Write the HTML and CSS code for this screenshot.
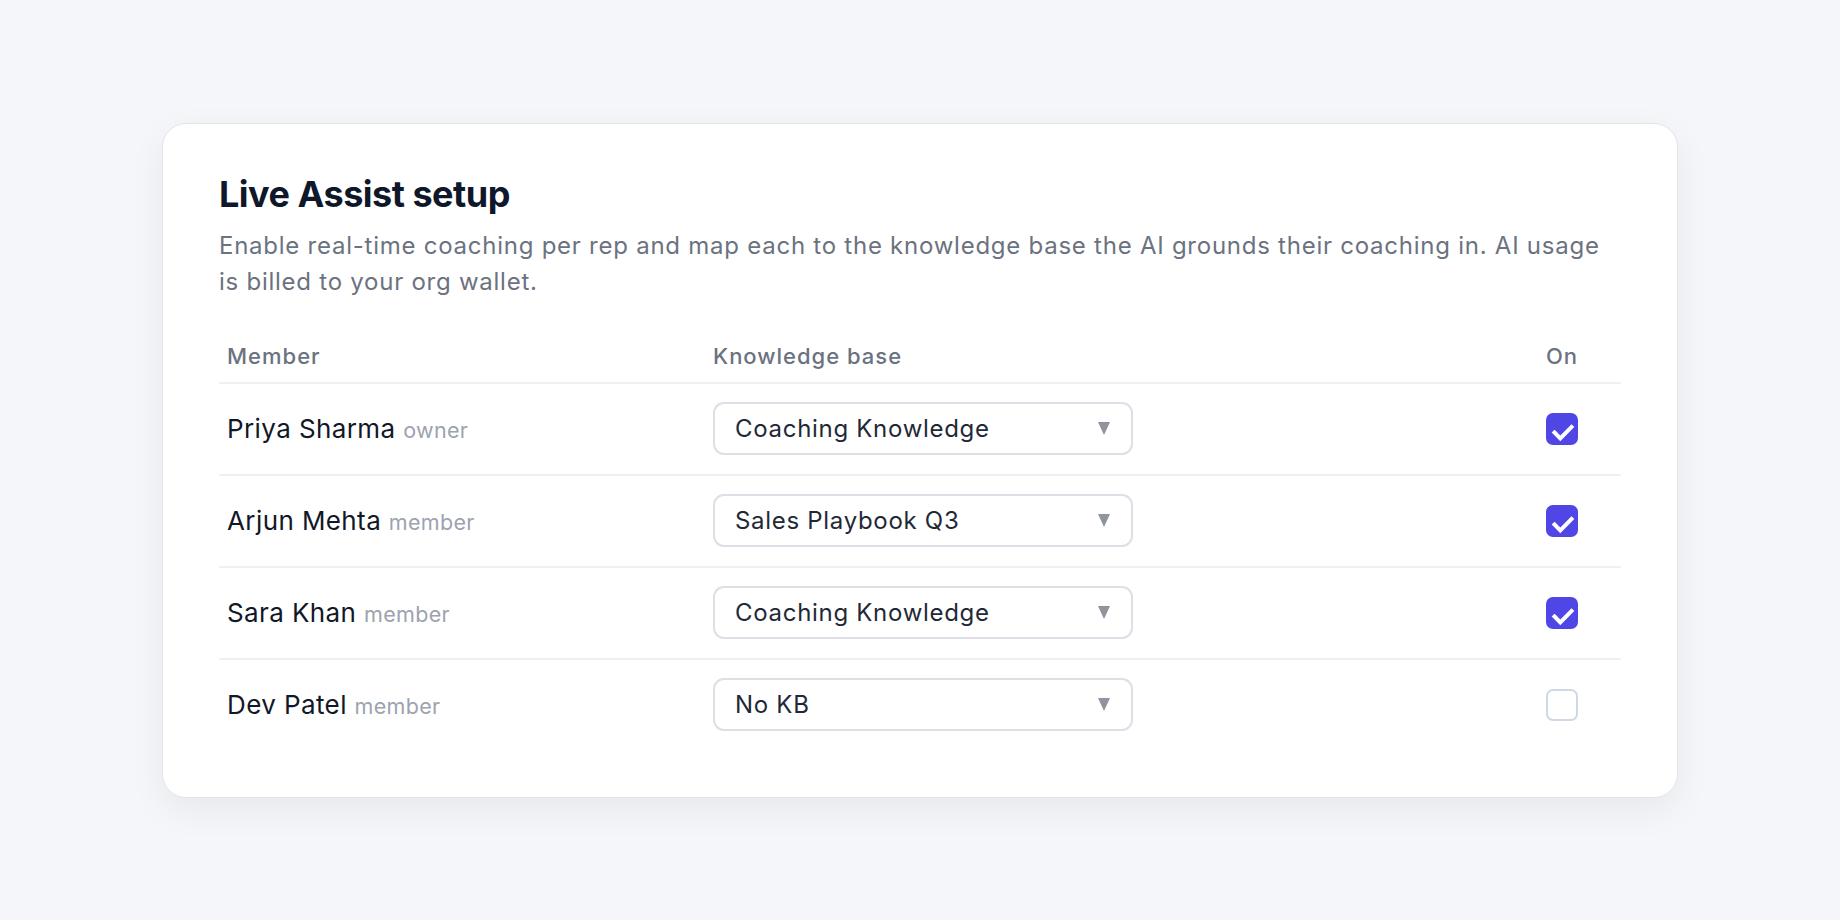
FILE: index.html
```html
<!DOCTYPE html>
<html lang="en">
<head>
    <meta charset="UTF-8">
    <meta name="viewport" content="width=device-width, initial-scale=1.0">
    <title>Live Assist setup</title>
    <link rel="stylesheet" href="styles.css">
</head>
<body>

<div class="card">
    <h1 class="title">Live Assist setup</h1>
    <p class="subtitle">Enable real-time coaching per rep and map each to the knowledge base the AI grounds their coaching in. AI usage is billed to your org wallet.</p>

    <div class="kb-table">
        <div class="row head">
            <div class="cell">Member</div>
            <div class="cell">Knowledge base</div>
            <div class="cell toggle">On</div>
        </div>

        <div class="row">
            <div class="cell member">Priya Sharma <span class="role">owner</span></div>
            <div class="cell">
                <div class="select">Coaching Knowledge <span class="arrow"></span></div>
            </div>
            <div class="cell toggle"><span class="check on"><svg viewBox="0 0 32 32"><path d="M8.5 19.5l5.8 5.8L25.5 14"/></svg></span></div>
        </div>

        <div class="row">
            <div class="cell member">Arjun Mehta <span class="role">member</span></div>
            <div class="cell">
                <div class="select">Sales Playbook Q3 <span class="arrow"></span></div>
            </div>
            <div class="cell toggle"><span class="check on"><svg viewBox="0 0 32 32"><path d="M8.5 19.5l5.8 5.8L25.5 14"/></svg></span></div>
        </div>

        <div class="row">
            <div class="cell member">Sara Khan <span class="role">member</span></div>
            <div class="cell">
                <div class="select">Coaching Knowledge <span class="arrow"></span></div>
            </div>
            <div class="cell toggle"><span class="check on"><svg viewBox="0 0 32 32"><path d="M8.5 19.5l5.8 5.8L25.5 14"/></svg></span></div>
        </div>

        <div class="row">
            <div class="cell member">Dev Patel <span class="role">member</span></div>
            <div class="cell">
                <div class="select">No KB <span class="arrow"></span></div>
            </div>
            <div class="cell toggle"><span class="check"></span></div>
        </div>
    </div>
</div>

</body>
</html>
```

FILE: styles.css
```css
/* Page */
body {
    margin: 0;
    font-family: Inter, "Noto Sans", sans-serif;
    display: flex;
    justify-content: center;
    align-items: center;
    height: 100vh;
    background-color: #f5f6f9;
}
.card {
    width: 1516px;
    box-sizing: border-box;
    padding: 48px 56px 47px;
    background: #fff;
    border: 1px solid #e3e5ea;
    border-radius: 24px;
    box-shadow: 0 12px 36px rgba(17, 24, 39, 0.06);
}
.title {
    margin: 0;
    font-size: 36px;
    line-height: 44px;
    font-weight: 700;
    letter-spacing: -0.5px;
    color: #0f172a;
}
.subtitle {
    margin: 12px 0 40px;
    font-size: 24px;
    line-height: 36px;
    letter-spacing: 0.75px;
    color: #6b7280;
}

/* Table */
.row {
    display: grid;
    grid-template-columns: 486px 1fr 118px;
    align-items: center;
    height: 90px;
    border-bottom: 2px solid #eef0f3;
}
.row:last-child {
    border-bottom: none;
}
.row.head {
    height: auto;
    padding-bottom: 10px;
    font-size: 22px;
    line-height: 32px;
    font-weight: 500;
    letter-spacing: 1px;
    color: #6b7280;
}
.cell {
    padding: 0 8px;
}
.toggle {
    display: flex;
    justify-content: center;
}
.member {
    font-size: 26px;
    letter-spacing: 0.4px;
    color: #111827;
}
.role {
    font-size: 21.5px;
    letter-spacing: 0.3px;
    color: #9ca3af;
}
.select {
    position: relative;
    width: 420px;
    height: 53px;
    box-sizing: border-box;
    padding: 0 20px;
    display: flex;
    align-items: center;
    border: 2px solid #dcdfe5;
    border-radius: 11px;
    font-size: 24px;
    letter-spacing: 0.7px;
    color: #1f2937;
}
.arrow {
    position: absolute;
    right: 21px;
    top: 18px;
    width: 0;
    height: 0;
    border-left: 6.5px solid transparent;
    border-right: 6.5px solid transparent;
    border-top: 13px solid #8f949d;
}
.check {
    width: 32px;
    height: 32px;
    box-sizing: border-box;
    border: 2px solid #cfd8e3;
    border-radius: 7px;
    background: #fff;
}
.check.on {
    border: none;
    background: #4f46e5;
}
.check svg {
    display: block;
    width: 32px;
    height: 32px;
    fill: none;
    stroke: #fff;
    stroke-width: 4;
    stroke-linecap: square;
}
```
